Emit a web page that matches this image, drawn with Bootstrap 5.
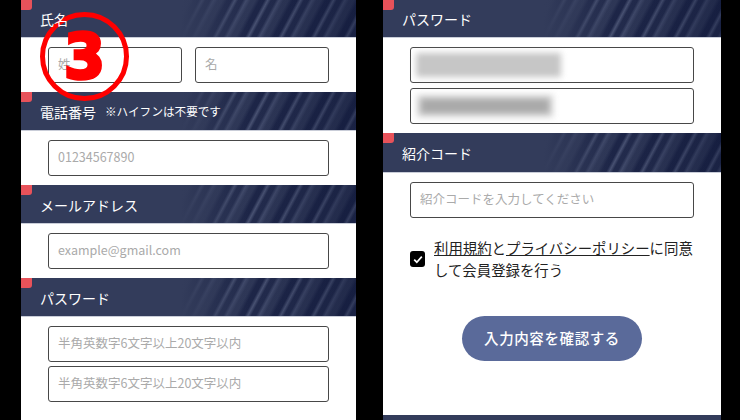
<!DOCTYPE html>
<html lang="ja">
<head>
<meta charset="utf-8">
<title>会員登録</title>
<link href="https://cdn.jsdelivr.net/npm/bootstrap@5.3.0/dist/css/bootstrap.min.css" rel="stylesheet">
<style>
html,body{height:420px;overflow:hidden;background:#000;}
body{font-family:"Noto Sans CJK JP","Noto Sans",sans-serif;color:#222;}
.stage{height:420px;padding-left:21px;gap:27px;position:relative;}
.sheet{background:#fff;height:420px;overflow:hidden;}
.sheet-l{width:335px;}
.sheet-r{width:338px;}
.band{position:relative;height:39px;background-color:#333c5b;color:#fff;font-size:14px;padding:2px 0 0 19px;display:flex;align-items:center;border-bottom:1px solid #c9cdd8;
 background-image:linear-gradient(90deg,rgba(10,18,52,0) 70%,rgba(10,18,52,.35)),repeating-linear-gradient(118deg,rgba(14,22,58,.15) 0 4px,rgba(14,22,58,.6) 8px 12px,rgba(120,130,165,.3) 15px,rgba(14,22,58,.45) 18px 22px,rgba(95,105,140,.3) 25px,rgba(14,22,58,.15) 29px);}
.band::before{content:"";position:absolute;left:0;top:0;width:11px;height:10px;background:#e8525a;border-bottom-right-radius:3px;z-index:2;}
.band::after{content:"";position:absolute;left:0;top:0;bottom:0;width:68%;background:linear-gradient(90deg,#333c5b 70%,rgba(51,60,91,0));}
.band>*{position:relative;z-index:1;}
.band-first{height:38px;}
.band-tall{height:40px;}
.note{font-size:11.6px;margin-left:9px;}
.fields{padding:9px 27px;display:flex;flex-direction:column;gap:4px;}
.fields-pair{flex-direction:row;justify-content:space-between;gap:0;}
.fields-loose{gap:5px;}
.fieldline{height:36px;border:1.6px solid #484848;border-radius:3px;background:#fff;color:#222;font-size:12.5px;padding:0 9px 3px;box-shadow:none;}
.fieldline::placeholder{color:#aaa;opacity:1;}
.half-line{width:134px;flex:none;}
.masked{display:flex;align-items:center;padding:0 5px;}
.smear{filter:blur(3px);background:#c6c6c6;}
.smear-a{width:145px;height:24px;}
.smear-b{width:128px;background:#a9a9a9;height:14px;box-shadow:0 0 0 4px #d4d4d4;margin-left:5px;}
.agree{padding:10px 27px 0;gap:9px;font-size:14.4px;line-height:22px;}
.tick{flex:none;width:15px;height:16px;background:#000;border-radius:3px;}
.agree a{color:#222;}
.go-btn{display:block;width:180px;height:45px;margin:35px 0 0 79px;border-radius:23px;background:#5a6a9a;border:0;color:#fff;font-size:14.5px;font-weight:500;letter-spacing:.6px;padding:0 0 2px;}
.foot-band{height:5px;background:#333c5b;margin-top:54px;}
.stamp{position:absolute;left:40px;top:12px;width:89px;height:89px;border:5.5px solid #f00;border-radius:50%;display:flex;align-items:center;justify-content:center;}
.stamp span{color:#f00;font-family:"DejaVu Sans",sans-serif;font-weight:700;font-size:62px;line-height:1;-webkit-text-stroke:3.5px #f00;transform:scaleX(.95);}
</style>
</head>
<body>
<div class="stage d-flex">
  <main class="sheet sheet-l">
    <div class="band band-first"><span>氏名</span></div>
    <div class="fields fields-pair"><input class="form-control fieldline half-line" placeholder="姓"><input class="form-control fieldline half-line" placeholder="名"></div>
    <div class="band"><span>電話番号</span><span class="note">※ハイフンは不要です</span></div>
    <div class="fields"><input class="form-control fieldline" placeholder="01234567890"></div>
    <div class="band"><span>メールアドレス</span></div>
    <div class="fields"><input class="form-control fieldline" placeholder="example@gmail.com"></div>
    <div class="band"><span>パスワード</span></div>
    <div class="fields"><input class="form-control fieldline" placeholder="半角英数字6文字以上20文字以内"><input class="form-control fieldline" placeholder="半角英数字6文字以上20文字以内"></div>
  </main>
  <section class="sheet sheet-r">
    <div class="band band-first"><span>パスワード</span></div>
    <div class="fields fields-loose">
      <div class="form-control fieldline masked"><div class="smear smear-a"></div></div>
      <div class="form-control fieldline masked"><div class="smear smear-b"></div></div>
    </div>
    <div class="band band-tall"><span>紹介コード</span></div>
    <div class="fields"><input class="form-control fieldline" placeholder="紹介コードを入力してください"></div>
    <div class="agree d-flex align-items-center">
      <span class="tick d-flex align-items-center justify-content-center"><svg width="10" height="9" viewBox="0 0 10 9"><path d="M1.2 4.6 3.8 7.2 8.8 1.6" fill="none" stroke="#fff" stroke-width="1.7"/></svg></span>
      <div><a href="#">利用規約</a>と<a href="#">プライバシーポリシー</a>に同意して会員登録を行う</div>
    </div>
    <button class="go-btn" type="button">入力内容を確認する</button>
    <div class="foot-band"></div>
  </section>
  <div class="stamp"><span>3</span></div>
</div>
<script src="https://cdn.jsdelivr.net/npm/bootstrap@5.3.0/dist/js/bootstrap.bundle.min.js"></script>
</body>
</html>
